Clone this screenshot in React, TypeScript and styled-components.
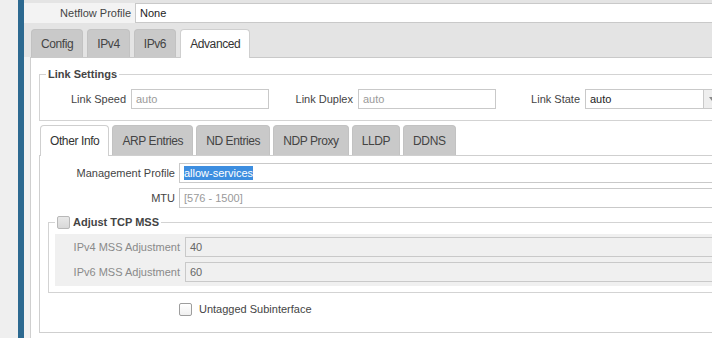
import React from 'react';
import styled, { createGlobalStyle } from 'styled-components';

const GlobalStyle = createGlobalStyle`
  html, body {
    margin: 0;
    padding: 0;
    background: #efefef;
  }
  body {
    font-family: "Liberation Sans", Arial, sans-serif;
    font-size: 11px;
    color: #333;
  }
`;

const Page = styled.div`
  display: flex;
  width: 712px;
  height: 338px;
  overflow: hidden;
  background: #efefef;
`;

const Gutter = styled.div`
  width: 18px;
  flex: none;
  background: #efefef;
`;

const Accent = styled.div`
  width: 6px;
  flex: none;
  background: #2c6990;
`;

const Dialog = styled.div`
  display: flex;
  flex-direction: column;
  width: 706px;
  flex: none;
  background: #f1f1f1;
`;

const TopStrip = styled.div`
  height: 3px;
  background: #e4e4e4;
`;

const Row = styled.div<{ $labelWidth: number; $gap?: number }>`
  display: flex;
  align-items: center;
  height: 20px;
  gap: ${(p) => p.$gap ?? 4}px;

  > label {
    width: ${(p) => p.$labelWidth}px;
    flex: none;
    text-align: right;
    white-space: nowrap;
  }
`;

const Label = styled.label<{ $muted?: boolean }>`
  color: ${(p) => (p.$muted ? '#8a8a8a' : '#444')};
  font-size: 11px;
`;

const TextBox = styled.div<{ $width?: number; $placeholder?: boolean; $disabled?: boolean }>`
  box-sizing: border-box;
  height: 20px;
  ${(p) => (p.$width ? `width: ${p.$width}px; flex: none;` : 'flex: 1;')}
  border: 1px solid #c9c9c9;
  background: ${(p) => (p.$disabled ? '#f0f0f0' : '#fff')};
  color: ${(p) => (p.$placeholder ? '#9a9a9a' : p.$disabled ? '#666' : '#222')};
  padding: 0 4px;
  display: flex;
  align-items: center;
  font-size: 11px;
  white-space: nowrap;
`;

const SelectWrap = styled.div<{ $width?: number }>`
  display: flex;
  height: 20px;
  ${(p) => (p.$width ? `width: ${p.$width}px; flex: none;` : 'flex: 1;')}
`;

const ArrowButton = styled.div`
  width: 17px;
  flex: none;
  box-sizing: border-box;
  border: 1px solid #c9c9c9;
  border-left: none;
  background: #eeeeee;
  display: flex;
  align-items: center;
  justify-content: center;

  &::after {
    content: '';
    border-left: 3px solid transparent;
    border-right: 3px solid transparent;
    border-top: 4px solid #8a8a8a;
  }
`;

const Selected = styled.span`
  background: #3d8ee0;
  color: #fff;
  padding: 1px 0;
`;

const NetflowRow = styled(Row)`
  background: #f3f3f3;
`;

const TabBar = styled.div`
  display: flex;
  align-items: flex-end;
  gap: 4px;
  height: 34px;
  padding-left: 7px;
  background: #e4e4e4;
  box-sizing: border-box;
`;

const Tab = styled.div<{ $active?: boolean }>`
  box-sizing: border-box;
  padding: 0 9px;
  display: flex;
  align-items: center;
  font-size: 12px;
  letter-spacing: -0.4px;
  color: ${(p) => (p.$active ? '#333' : '#444')};
  background: ${(p) => (p.$active ? '#fff' : '#c9c9c9')};
  border: 1px solid ${(p) => (p.$active ? '#cfcfcf' : '#c2c2c2')};
  border-bottom: none;
  border-radius: 4px 4px 0 0;
  margin-bottom: ${(p) => (p.$active ? '-1px' : '0')};
  height: ${(p) => (p.$active ? '29px' : '28px')};
  position: relative;
`;

const TabPanel = styled.div`
  flex: 1;
  margin-left: 6px;
  background: #fff;
  border-top: 1px solid #c9c9c9;
  border-left: 1px solid #cfcfcf;
  padding: 10px 0 0 8px;
`;

const Fieldset = styled.fieldset`
  margin: 0;
  border: 1px solid #d3d3d3;
  border-right: none;
  padding: 0 0 0 6px;
  min-width: 0;

  > legend {
    padding: 0 2px;
    display: flex;
    align-items: center;
    gap: 3px;
    font-weight: bold;
    font-size: 11px;
    color: #444;
    line-height: 13px;
  }
`;

const LinkFields = styled.div`
  display: flex;
  padding: 8px 0 11px;
`;

const SubTabBar = styled.div`
  display: flex;
  align-items: flex-end;
  gap: 3px;
  margin-top: 4px;
  height: 31px;
  box-sizing: border-box;
  padding-left: 1px;
  border-bottom: 1px solid #cfcfcf;
`;

const SubTab = styled(Tab)`
  height: ${(p) => (p.$active ? '31px' : '30px')};
`;

const SubPanel = styled.div`
  border-left: 1px solid #cfcfcf;
  border-bottom: 1px solid #cfcfcf;
  padding: 7px 0 15px 0;
  display: flex;
  flex-direction: column;
  gap: 5px;
`;

const MssFieldset = styled(Fieldset)`
  margin: 3px 0 0 8px;
  padding-bottom: 6px;
`;

const MssArea = styled.div`
  margin-top: 5px;
  background: #f0f0f0;
  padding: 3px 0 4px;
  display: flex;
  flex-direction: column;
  gap: 5px;
`;

const Checkbox = styled.span<{ $disabled?: boolean }>`
  width: 13px;
  height: 13px;
  box-sizing: border-box;
  flex: none;
  border: 1px solid ${(p) => (p.$disabled ? '#b8b8b8' : '#9d9d9d')};
  border-radius: 2px;
  background: ${(p) =>
    p.$disabled ? 'linear-gradient(#e9e9e9, #d8d8d8)' : 'linear-gradient(#ffffff, #f0f0f0)'};
`;

const CheckRow = styled.div`
  display: flex;
  align-items: center;
  gap: 7px;
  height: 16px;
  margin-top: 3px;
  padding-left: 139px;
  color: #444;
`;

const mainTabs = ['Config', 'IPv4', 'IPv6', 'Advanced'];
const subTabs = ['Other Info', 'ARP Entries', 'ND Entries', 'NDP Proxy', 'LLDP', 'DDNS'];

export default function App() {
  return (
    <>
      <GlobalStyle />
      <Page>
        <Gutter />
        <Accent />
        <Dialog>
          <TopStrip />
          <NetflowRow $labelWidth={107}>
            <Label>Netflow Profile</Label>
            <TextBox>None</TextBox>
          </NetflowRow>
          <TabBar>
            {mainTabs.map((t) => (
              <Tab key={t} $active={t === 'Advanced'}>
                {t}
              </Tab>
            ))}
          </TabBar>
          <TabPanel>
            <Fieldset>
              <legend>Link Settings</legend>
              <LinkFields>
                <Row $labelWidth={80} $gap={5}>
                  <Label>Link Speed</Label>
                  <TextBox $width={138} $placeholder>
                    auto
                  </TextBox>
                </Row>
                <Row $labelWidth={84} $gap={5}>
                  <Label>Link Duplex</Label>
                  <TextBox $width={138} $placeholder>
                    auto
                  </TextBox>
                </Row>
                <Row $labelWidth={84} $gap={5}>
                  <Label>Link State</Label>
                  <SelectWrap $width={136}>
                    <TextBox>auto</TextBox>
                    <ArrowButton />
                  </SelectWrap>
                </Row>
              </LinkFields>
            </Fieldset>

            <SubTabBar>
              {subTabs.map((t) => (
                <SubTab key={t} $active={t === 'Other Info'}>
                  {t}
                </SubTab>
              ))}
            </SubTabBar>
            <SubPanel>
              <Row $labelWidth={135}>
                <Label>Management Profile</Label>
                <SelectWrap>
                  <TextBox>
                    <Selected>allow-services</Selected>
                  </TextBox>
                  <ArrowButton />
                </SelectWrap>
              </Row>
              <Row $labelWidth={135}>
                <Label>MTU</Label>
                <TextBox $placeholder>[576 - 1500]</TextBox>
              </Row>

              <MssFieldset>
                <legend>
                  <Checkbox $disabled />
                  Adjust TCP MSS
                </legend>
                <MssArea>
                  <Row $labelWidth={125} $gap={5}>
                    <Label $muted>IPv4 MSS Adjustment</Label>
                    <TextBox $disabled>40</TextBox>
                  </Row>
                  <Row $labelWidth={125} $gap={5}>
                    <Label $muted>IPv6 MSS Adjustment</Label>
                    <TextBox $disabled>60</TextBox>
                  </Row>
                </MssArea>
              </MssFieldset>

              <CheckRow>
                <Checkbox />
                Untagged Subinterface
              </CheckRow>
            </SubPanel>
          </TabPanel>
        </Dialog>
      </Page>
    </>
  );
}
